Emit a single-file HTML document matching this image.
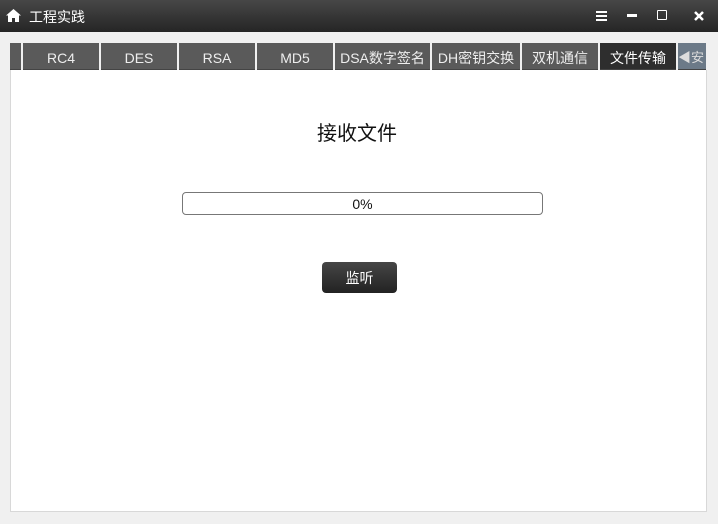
<!DOCTYPE html><html><head><meta charset="utf-8"><style>
body{margin:0;width:718px;height:524px;background:#f0f0f0;position:relative;overflow:hidden;font-family:"Liberation Sans","Noto Sans CJK SC",sans-serif}
.tb{position:absolute;left:0;top:0;width:718px;height:32px;background:linear-gradient(#474747,#252525);color:#fff}
.t{position:absolute;height:27px;top:43px;background:#5a5a5a;color:#eee;font-size:14px;line-height:30px;text-align:center;box-shadow:inset 0 -1px #444}
.panel{position:absolute;left:10px;top:70px;width:695px;height:441px;background:#fff;border:1px solid #d8d8d8;border-top:none}
</style></head><body>
<div class="tb">
<svg style="position:absolute;left:6px;top:9px" width="15" height="13" viewBox="0 0 15 13"><path d="M7.5 0L0 6.5h2V13h4V9h3v4h4V6.5h2z" fill="#fff"/></svg>
<span style="position:absolute;left:29px;top:7px;font-size:14px">工程实践</span>
<svg style="position:absolute;left:596px;top:11px" width="11" height="10"><rect y="0" width="11" height="2" fill="#fff"/><rect y="4" width="11" height="2" fill="#fff"/><rect y="8" width="11" height="2" fill="#fff"/></svg>
<div style="position:absolute;left:627px;top:14px;width:10px;height:3px;background:#fff"></div>
<div style="position:absolute;left:657px;top:10px;width:8px;height:8px;border:1.5px solid #fff;border-radius:1px"></div>
<svg style="position:absolute;left:694px;top:11px" width="10" height="10"><path d="M1 1L9 9M9 1L1 9" stroke="#fff" stroke-width="2.5"/></svg>
</div>
<div class="t" style="left:10px;width:11px;background:#5a5a5a"></div>
<div class="t" style="left:23px;width:76px">RC4</div>
<div class="t" style="left:101px;width:76px">DES</div>
<div class="t" style="left:179px;width:76px">RSA</div>
<div class="t" style="left:257px;width:76px">MD5</div>
<div class="t" style="left:335px;width:95px">DSA数字签名</div>
<div class="t" style="left:432px;width:88px">DH密钥交换</div>
<div class="t" style="left:522px;width:76px">双机通信</div>
<div class="t" style="left:600px;width:76px;background:#2e2e2e;color:#fff">文件传输</div>
<div class="t" style="left:678px;width:28px;background:#6c7a88;color:#ddd;text-align:left;overflow:hidden;font-size:13px">&#9664;安&#9654;</div>
<div class="panel"></div>
<div style="position:absolute;left:0;width:718px;top:117px;text-align:center;font-size:20px;color:#111"><span style="position:relative;left:-2px">接收文件</span></div>
<div style="position:absolute;left:182px;top:192px;width:359px;height:21px;border:1px solid #777;border-radius:4px;text-align:center;font-size:14px;line-height:23px;color:#111">0%</div>
<div style="position:absolute;left:322px;top:262px;width:75px;height:31px;border-radius:4px;background:linear-gradient(#464646,#222);color:#fff;font-size:14px;line-height:32px;text-align:center">监听</div>
</body></html>
